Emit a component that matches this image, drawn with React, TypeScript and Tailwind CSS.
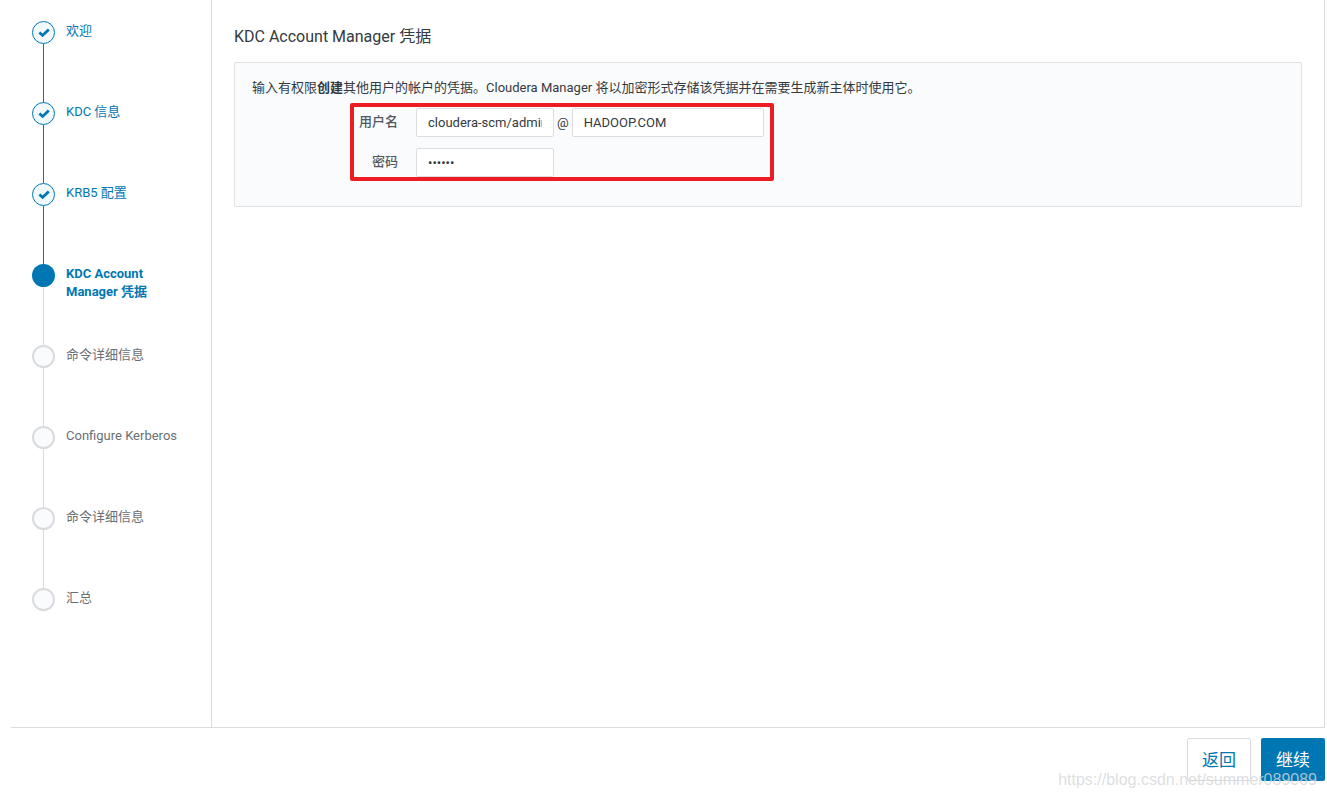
import { useState } from 'react';

type StepState = 'done' | 'current' | 'todo';

const steps: { label: string; state: StepState }[] = [
  { label: '欢迎', state: 'done' },
  { label: 'KDC 信息', state: 'done' },
  { label: 'KRB5 配置', state: 'done' },
  { label: 'KDC Account Manager 凭据', state: 'current' },
  { label: '命令详细信息', state: 'todo' },
  { label: 'Configure Kerberos', state: 'todo' },
  { label: '命令详细信息', state: 'todo' },
  { label: '汇总', state: 'todo' },
];

const circleStyles = {
  done: 'border border-[#0077b3] bg-[#f2f9fd]',
  current: 'bg-[#0077b3]',
  todo: 'border-2 border-[#d9dbdf] bg-[#fafbfd]',
};

const labelStyles = {
  done: 'text-[#0077b3]',
  current: 'font-bold text-[#0077b3]',
  todo: 'text-[#696f76]',
};

const inputStyle =
  'h-[29px] rounded-xs border border-[#dcdee1] bg-white px-[11px] text-[13px] text-[#333a40] focus:outline-none focus:border-[#0077b3]';

const WizardSteps = () => (
  <nav className="w-[201px] shrink-0 border-r border-[#d9dbdf] pt-[21px] pl-[21px]">
    <ol>
      {steps.map((step, i) => (
        <li key={i} className="flex gap-[11px]">
          <div className="flex flex-col items-center">
            <span
              className={`flex size-[23px] items-center justify-center rounded-full ${circleStyles[step.state]}`}
            >
              {step.state === 'done' && (
                <svg viewBox="0 0 12 10" className="h-[10px] w-[12px]" aria-hidden="true">
                  <path d="M1.4 4.4 L4.6 7.4 L10.8 1.4" fill="none" stroke="#0077b3" strokeWidth="2.8" />
                </svg>
              )}
            </span>
            {i < steps.length - 1 && (
              <span
                className={`h-[58px] w-px ${step.state === 'done' ? 'bg-[#0077b3]' : 'bg-[#d9dbdf]'}`}
              />
            )}
          </div>
          <span className={`w-[112px] pt-px leading-[18px] ${labelStyles[step.state]}`}>
            {step.label}
          </span>
        </li>
      ))}
    </ol>
  </nav>
);

const CredentialsForm = () => {
  const [username, setUsername] = useState('cloudera-scm/admin');
  const [realm, setRealm] = useState('HADOOP.COM');
  const [password, setPassword] = useState('secret');

  return (
    <section className="rounded-xs border border-[#dfe1e4] bg-[#fafbfd] px-[17px] pt-4 pb-[25px]">
      <p className="leading-[18px]">
        输入有权限<b>创建</b>其他用户的帐户的凭据。Cloudera Manager
        将以加密形式存储该凭据并在需要生成新主体时使用它。
      </p>
      <form
        id="credentials"
        onSubmit={(e) => e.preventDefault()}
        className="mt-[6px] ml-[98px] grid w-[424px] grid-cols-[44px_1fr] gap-x-[18px] gap-y-[11px] rounded-xs border-4 border-[#ed1c24] pt-px"
      >
        <label htmlFor="username" className="pt-[5px] text-right font-medium text-[#51585f]">
          用户名
        </label>
        <div className="flex items-center gap-[3px]">
          <input
            id="username"
            type="text"
            className={`w-[138px] ${inputStyle}`}
            value={username}
            onChange={(e) => setUsername(e.target.value)}
          />
          <label htmlFor="realm">@</label>
          <input
            id="realm"
            type="text"
            className={`w-[192px] ${inputStyle}`}
            value={realm}
            onChange={(e) => setRealm(e.target.value)}
          />
        </div>
        <label htmlFor="password" className="pt-[5px] text-right font-medium text-[#51585f]">
          密码
        </label>
        <input
          id="password"
          type="password"
          className={`w-[138px] ${inputStyle}`}
          value={password}
          onChange={(e) => setPassword(e.target.value)}
        />
      </form>
    </section>
  );
};

const App = () => (
  <div className="relative flex min-h-screen flex-col bg-white pr-[2px] pl-[11px] font-['Roboto','Noto_Sans_CJK_SC',sans-serif] text-[13px] leading-[18px] text-[#333a40]">
    <div className="flex flex-1 border-r border-b border-[#d9dbdf]">
      <WizardSteps />
      <main className="min-w-0 flex-1 px-[22px] pt-[25px]">
        <h1 className="mb-[13px] text-[16px] leading-6">KDC Account Manager 凭据</h1>
        <CredentialsForm />
      </main>
    </div>

    <footer className="flex justify-end gap-[10px] pt-[10px] pb-[17px]">
      <button
        type="button"
        className="h-[43px] w-16 rounded-xs border border-[#d9dbdf] bg-white text-[17px] text-[#0077b3] hover:bg-gray-50"
      >
        返回
      </button>
      <button
        type="submit"
        form="credentials"
        className="h-[43px] w-16 rounded-xs bg-[#0077b3] text-[17px] text-white hover:bg-[#00669a]"
      >
        继续
      </button>
    </footer>

    <span className="pointer-events-none absolute right-[10px] bottom-[9px] font-['Liberation_Sans',sans-serif] text-[16px] text-[#d4d6d8]/80">
      https://blog.csdn.net/summer089089
    </span>
  </div>
);

export default App;
